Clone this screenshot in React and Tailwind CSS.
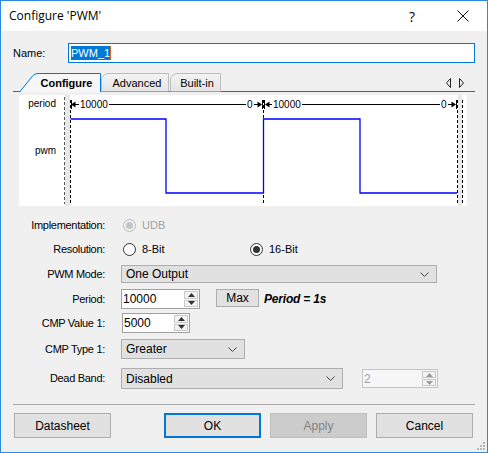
import React from "react";

function Chevron() {
  return (
    <svg width="9" height="5" viewBox="0 0 9 5" className="shrink-0">
      <path d="M0.5 0.5 L4.5 4.5 L8.5 0.5" fill="none" stroke="#444" strokeWidth="1" />
    </svg>
  );
}

function Dropdown({ value, className }) {
  return (
    <div
      className={
        "flex items-center justify-between border border-[#adadad] bg-[#e1e1e1] pl-[4px] pr-[7px] " +
        className
      }
    >
      <span>{value}</span>
      <Chevron />
    </div>
  );
}

function Spin({ value, className, disabled = false }) {
  const tri = disabled ? "#9a9a9a" : "#333";
  return (
    <div
      className={
        "flex border " +
        (disabled
          ? "border-[#c4c4c4] bg-[#f6f6f6] text-[#9aa0a8] "
          : "border-[#a0a0a0] bg-white ") +
        className
      }
    >
      <span className="flex-1 flex items-center pl-[1px] text-[12px]">{value}</span>
      <div className="flex flex-col w-[15px] py-[1px] pr-[1px] gap-[1px]">
        <div className="flex-1 flex items-center justify-center border border-[#c8c8c8] bg-[#f3f3f3]">
          <svg width="7" height="4" viewBox="0 0 7 4">
            <path d="M0 4 L3.5 0 L7 4 Z" fill={tri} />
          </svg>
        </div>
        <div className="flex-1 flex items-center justify-center border border-[#c8c8c8] bg-[#f3f3f3]">
          <svg width="7" height="4" viewBox="0 0 7 4">
            <path d="M0 0 L7 0 L3.5 4 Z" fill={tri} />
          </svg>
        </div>
      </div>
    </div>
  );
}

function Radio({ checked = false, disabled = false, label }) {
  return (
    <div className="flex items-center gap-[6px]">
      <span
        className={
          "w-[13px] h-[13px] rounded-full border flex items-center justify-center " +
          (disabled ? "border-[#bcbcbc] bg-[#f0f0f0]" : "border-[#333] bg-white")
        }
      >
        {(checked || disabled) && (
          <span
            className={
              "w-[7px] h-[7px] rounded-full " + (disabled ? "bg-[#c4c4c4]" : "bg-[#333]")
            }
          />
        )}
      </span>
      <span className={disabled ? "text-[#a0a0a0]" : ""}>{label}</span>
    </div>
  );
}

function Row({ label, className, children }) {
  return (
    <div className={"flex items-center " + className}>
      <span className="w-[92px] text-right shrink-0 tracking-[-0.3px]">{label}</span>
      {children}
    </div>
  );
}

function Btn({ children, variant }) {
  let cls = "border border-[#adadad] bg-[#e1e1e1]";
  if (variant === "primary") cls = "border-2 border-[#0078d7] bg-[#e1e1e1]";
  if (variant === "disabled") cls = "border border-[#bfbfbf] bg-[#cccccc] text-[#838383]";
  return (
    <div className={"w-[97px] h-[25px] flex items-center justify-center text-[12px] " + cls}>
      {children}
    </div>
  );
}

function Diagram() {
  const dash = "3 2";
  return (
    <svg width="403" height="111" viewBox="0 0 403 111" className="shrink-0">
      <rect x="1" y="0" width="5" height="111" fill="#e8e8e8" />
      <rect x="394" y="0" width="4" height="111" fill="#e8e8e8" />
      <line x1="0.5" y1="2" x2="0.5" y2="109" stroke="#555" strokeDasharray={dash} />
      <line x1="6.5" y1="5" x2="6.5" y2="110" stroke="#000" strokeDasharray={dash} />
      <line x1="199.5" y1="5" x2="199.5" y2="109" stroke="#000" strokeDasharray={dash} />
      <line x1="393.5" y1="5" x2="393.5" y2="110" stroke="#000" strokeDasharray={dash} />
      <line x1="398.5" y1="5" x2="398.5" y2="110" stroke="#000" strokeDasharray={dash} />

      {/* period markers */}
      <g stroke="#000" strokeWidth="1">
        <line x1="7.5" y1="5" x2="7.5" y2="14" />
        <line x1="11" y1="9.5" x2="15" y2="9.5" />
        <line x1="45" y1="9.5" x2="182" y2="9.5" />
        <line x1="190" y1="9.5" x2="194" y2="9.5" />
        <line x1="198.5" y1="5" x2="198.5" y2="14" />
        <line x1="200.5" y1="5" x2="200.5" y2="14" />
        <line x1="205" y1="9.5" x2="208" y2="9.5" />
        <line x1="238" y1="9.5" x2="376" y2="9.5" />
        <line x1="384" y1="9.5" x2="388" y2="9.5" />
        <line x1="392.5" y1="5" x2="392.5" y2="14" />
      </g>
      <g fill="#000">
        <path d="M7 9.5 L11.5 6.5 L11.5 12.5 Z" />
        <path d="M198 9.5 L193.5 6.5 L193.5 12.5 Z" />
        <path d="M201 9.5 L205.5 6.5 L205.5 12.5 Z" />
        <path d="M392 9.5 L387.5 6.5 L387.5 12.5 Z" />
      </g>
      <g fontFamily="'Liberation Sans', Arial, sans-serif" fontSize="10" fill="#000">
        <text x="16" y="13">10000</text>
        <text x="183" y="13">0</text>
        <text x="209" y="13">10000</text>
        <text x="377" y="13">0</text>
      </g>

      <path
        d="M6.5 24 H102 V98 H199.5 V24 H296 V98 H393"
        fill="none"
        stroke="#0000ff"
        strokeWidth="1.3"
      />
    </svg>
  );
}

function Tabs() {
  return (
    <div className="relative h-[19px] flex items-center mt-[10px]">
      <svg width="462" height="19" viewBox="0 0 462 19" className="absolute left-0 top-0">
        <defs>
          <linearGradient id="tabg" x1="0" y1="0" x2="0" y2="1">
            <stop offset="0" stopColor="#f4f4f4" />
            <stop offset="1" stopColor="#e4e4e4" />
          </linearGradient>
        </defs>
        <line x1="0" y1="18.5" x2="462" y2="18.5" stroke="#0078d7" />
        <path d="M157.5 18.5 V5 Q160 0.5 164 0.5 H207.5 V18.5" fill="url(#tabg)" stroke="#bdbdbd" />
        <path d="M88.5 18.5 V5 Q91 0.5 95 0.5 H155.5 V18.5" fill="url(#tabg)" stroke="#bdbdbd" />
        <path d="M7 18.5 L20 2.5 Q22 0.5 25 0.5 H87.5 V19" fill="#f7f7f7" stroke="#0078d7" />
        <rect x="8" y="18" width="79" height="1.5" fill="#f7f7f7" />
      </svg>
      <span className="relative ml-[20px] w-[67px] text-center font-bold pt-[1px]">Configure</span>
      <span className="relative w-[68px] pl-[6px] text-center pt-[1px]">Advanced</span>
      <span className="relative w-[52px] pl-[6px] text-center pt-[1px]">Built-in</span>
      <svg width="18" height="10" viewBox="0 0 18 10" className="relative ml-auto mr-[11px]">
        <path d="M4.5 0.5 L0.5 5 L4.5 9.5 Z" fill="none" stroke="#222" />
        <path d="M13.5 0.5 L17.5 5 L13.5 9.5 Z" fill="none" stroke="#222" />
      </svg>
    </div>
  );
}

export default function App() {
  return (
    <div className="relative w-[488px] h-[453px] border border-[#2b8ae0] bg-[#f0f0f0] flex flex-col font-['Liberation_Sans',Arial,sans-serif] text-[11px] text-black">
      {/* title bar */}
      <div className="h-[30px] bg-white flex items-center pl-[8px] shrink-0">
        <span className="font-['Open_Sans',sans-serif] text-[12px]">Configure 'PWM'</span>
        <span className="ml-auto font-['Open_Sans',sans-serif] text-[14px] w-[12px] text-center mr-[39px]">
          ?
        </span>
        <svg width="12" height="12" viewBox="0 0 12 12" className="mr-[18px]">
          <path d="M0.5 0.5 L11.5 11.5 M11.5 0.5 L0.5 11.5" stroke="#111" strokeWidth="1" />
        </svg>
      </div>

      <div className="flex flex-col px-[12px]">
        {/* name */}
        <div className="flex items-center h-[20px] mt-[12px]">
          <span className="w-[55px]">Name:</span>
          <div className="flex-1 h-full border border-[#0078d7] bg-white flex items-center pl-[2px]">
            <span className="bg-[#0078d7] text-white leading-[14px] px-[0px]">PWM_1</span>
            <span className="w-[1px] h-[14px] bg-[#c46a1a]" />
          </div>
        </div>

        <Tabs />

        {/* diagram */}
        <div className="mt-[3px] ml-[6px] w-[448px] h-[111px] bg-white flex">
          <div className="w-[45px] shrink-0 flex flex-col items-end pr-[8px] pt-[3px] text-[10px] leading-[12px]">
            <span>period</span>
            <span className="mt-[35px]">pwm</span>
          </div>
          <Diagram />
        </div>

        {/* form */}
        <Row label="Implementation:" className="h-[18px] mt-[10px]">
          <div className="ml-[18px]">
            <Radio disabled label="UDB" />
          </div>
        </Row>
        <Row label="Resolution:" className="h-[18px] mt-[6px]">
          <div className="ml-[18px] w-[127px]">
            <Radio label="8-Bit" />
          </div>
          <Radio checked label="16-Bit" />
        </Row>
        <Row label="PWM Mode:" className="h-[18px] mt-[7px]">
          <Dropdown value="One Output" className="ml-[16px] w-[316px] h-[18px] text-[12px]" />
        </Row>
        <Row label="Period:" className="h-[20px] mt-[6px]">
          <Spin value="10000" className="ml-[16px] w-[79px] h-[20px]" />
          <div className="ml-[16px] w-[43px] h-[18px] self-start border border-[#adadad] bg-[#e1e1e1] flex items-center justify-center text-[12px]">
            Max
          </div>
          <span className="ml-[5px] font-bold italic text-[12px] tracking-[-0.2px]">Period = 1s</span>
        </Row>
        <Row label="CMP Value 1:" className="h-[20px] mt-[4px]">
          <Spin value="5000" className="ml-[17px] w-[68px] h-[20px]" />
        </Row>
        <Row label="CMP Type 1:" className="h-[20px] mt-[6px]">
          <Dropdown value="Greater" className="ml-[16px] w-[124px] h-[20px] text-[12px]" />
        </Row>
        <Row label="Dead Band:" className="h-[21px] mt-[9px]">
          <Dropdown value="Disabled" className="ml-[16px] w-[222px] h-[21px] text-[12px]" />
          <Spin disabled value="2" className="ml-[19px] w-[76px] h-[19px]" />
        </Row>

        <div className="mt-[15px] border-t border-[#a8a8a8]" />

        <div className="flex mt-[8px] pl-[1px] pr-[2px]">
          <Btn>Datasheet</Btn>
          <div className="ml-auto flex gap-[9px]">
            <Btn variant="primary">OK</Btn>
            <Btn variant="disabled">Apply</Btn>
            <Btn>Cancel</Btn>
          </div>
        </div>
      </div>

      {/* resize grip */}
      <svg width="9" height="9" viewBox="0 0 9 9" className="absolute right-[2px] bottom-[2px]">
        <g fill="#b5b5b5">
          <rect x="7" y="1" width="2" height="2" />
          <rect x="4" y="4" width="2" height="2" />
          <rect x="7" y="4" width="2" height="2" />
          <rect x="1" y="7" width="2" height="2" />
          <rect x="4" y="7" width="2" height="2" />
          <rect x="7" y="7" width="2" height="2" />
        </g>
      </svg>
    </div>
  );
}
